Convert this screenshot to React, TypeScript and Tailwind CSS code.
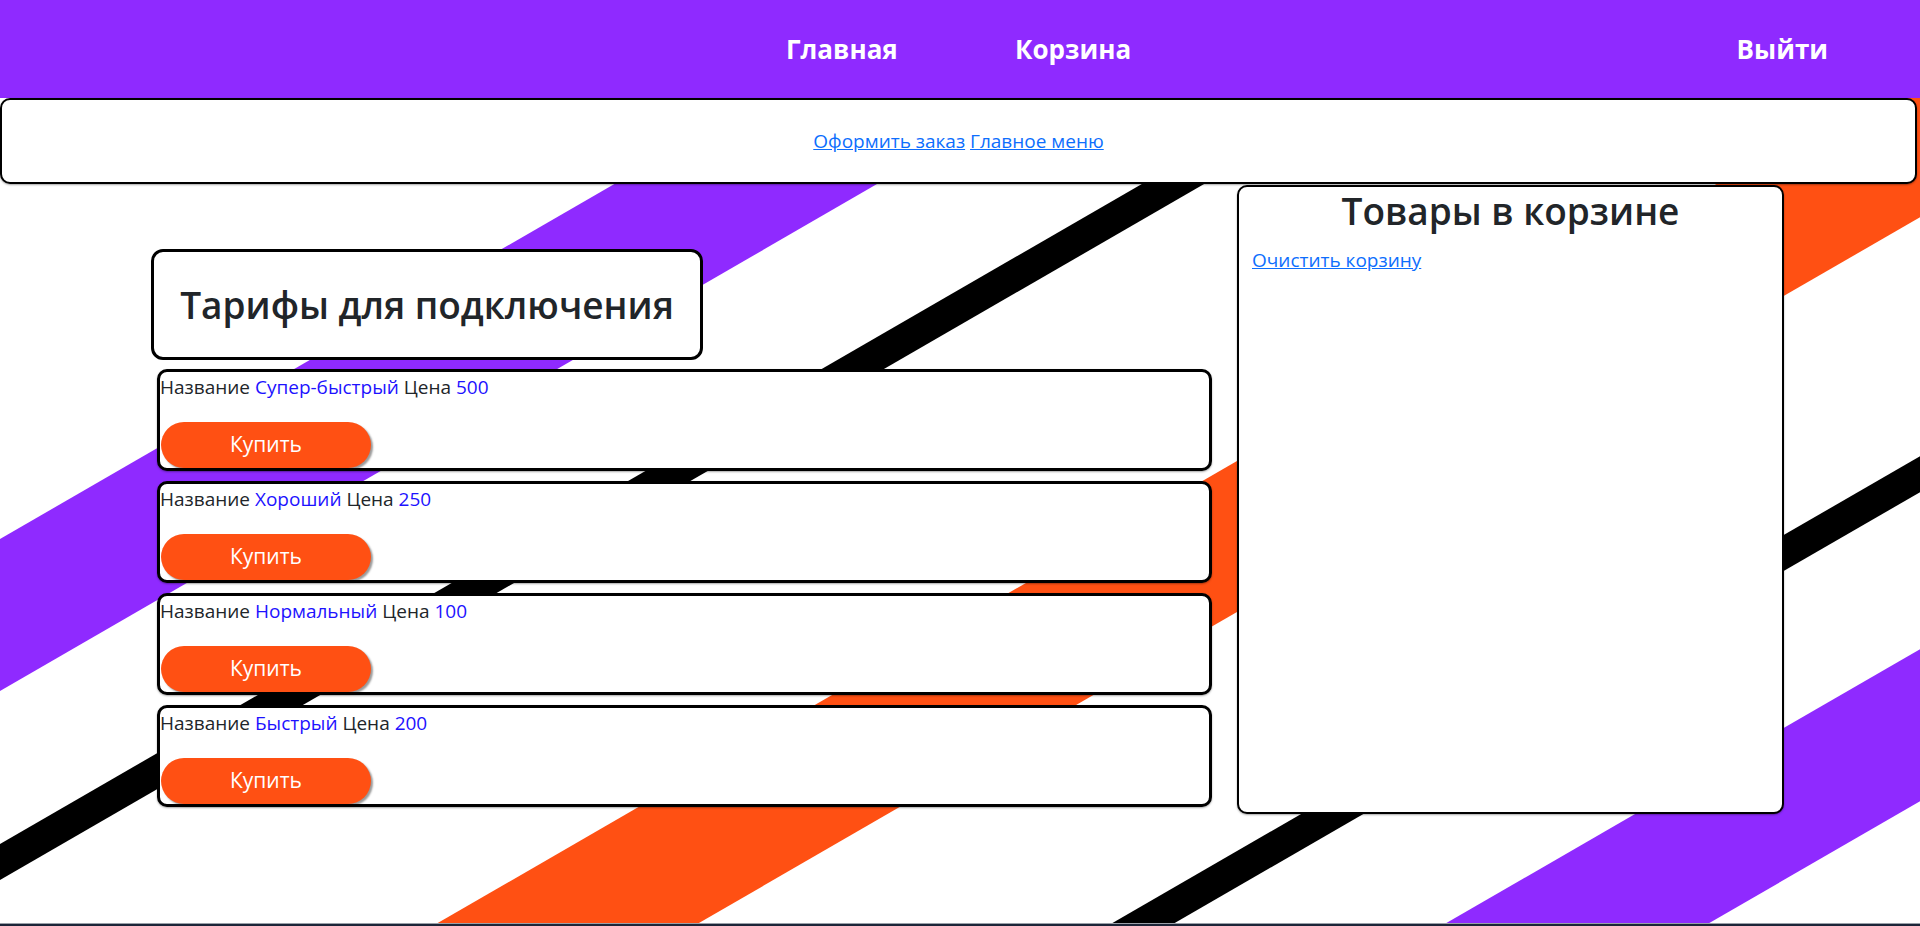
import React from 'react';

// Tariffs offered on the page
const tariffs = [
  { name: 'Супер-быстрый', price: 500 },
  { name: 'Хороший', price: 250 },
  { name: 'Нормальный', price: 100 },
  { name: 'Быстрый', price: 200 },
];

// Diagonal stripe bands: each band lies between two lines y + S * x = c
const S = 0.578;
const bands = [
  { c1: 539, c2: 691, color: '#8f2aff' },
  { c1: 844, c2: 880, color: '#000000' },
  { c1: 1176, c2: 1327, color: '#ff5013' },
  { c1: 1566, c2: 1602, color: '#000000' },
  { c1: 1759, c2: 1911, color: '#8f2aff' },
];

const bandPoints = (c1: number, c2: number): string => {
  const x0 = -100;
  const x1 = 2100;
  return [
    `${x0},${c1 - S * x0}`,
    `${x1},${c1 - S * x1}`,
    `${x1},${c2 - S * x1}`,
    `${x0},${c2 - S * x0}`,
  ].join(' ');
};

const StripesBackground: React.FC = () => (
  <svg
    className="absolute inset-x-0 top-0 h-[926px] w-full"
    viewBox="0 0 1920 926"
    preserveAspectRatio="none"
    aria-hidden="true"
  >
    <rect width="1920" height="926" fill="#ffffff" />
    {bands.map((b, i) => (
      <polygon key={i} points={bandPoints(b.c1, b.c2)} fill={b.color} />
    ))}
  </svg>
);

const Header: React.FC = () => (
  <header className="flex h-[98px] items-center bg-[#8f2aff] text-[26px] font-bold text-white">
    <nav className="ml-[786px] flex items-center">
      <a href="#" className="w-[229px]">Главная</a>
      <a href="#">Корзина</a>
    </nav>
    <a href="#" className="ml-auto mr-[92px]">Выйти</a>
  </header>
);

const TariffCard: React.FC<{ name: string; price: number }> = ({ name, price }) => (
  <div className="flex h-[102px] flex-col justify-between rounded-[10px] border-[3px] border-black bg-white shadow-[0_1px_2px_rgba(0,0,0,0.35)]">
    <p className="pt-[3px] text-[19px] leading-[24px] text-[#212529]">
      Название <span className="text-[#1d12ff]">{name}</span> Цена{' '}
      <span className="text-[#1d12ff]">{price}</span>
    </p>
    <button
      type="button"
      className="ml-px h-[46px] w-[210px] rounded-full bg-[#ff5013] text-[21px] text-white shadow-[2px_2px_2px_rgba(0,0,0,0.4)]"
    >
      Купить
    </button>
  </div>
);

const App: React.FC = () => {
  return (
    <div className="relative h-[926px] overflow-hidden font-['Open_Sans',sans-serif] text-[#212529]">
      <StripesBackground />
      <div className="relative flex h-[923px] flex-col">
        <Header />

        <div className="mr-[3px] flex h-[86px] items-center justify-center rounded-[10px] border-2 border-black bg-white shadow-[0_1px_2px_rgba(0,0,0,0.35)]">
          <p className="text-[19px] leading-[30px]">
            <a href="#" className="text-[#0d6efd] underline">Оформить заказ</a>{' '}
            <a href="#" className="text-[#0d6efd] underline">Главное меню</a>
          </p>
        </div>

        <main className="flex items-start">
          {/* Tariffs column */}
          <section className="ml-[151px] flex w-[1061px] flex-col pt-[65px]">
            <div className="flex h-[111px] w-[552px] items-center justify-center rounded-[12px] border-[3px] border-black bg-white">
              <h2 className="text-[37px] font-semibold leading-[48px] text-[#212529]">
                Тарифы для подключения
              </h2>
            </div>
            <div className="ml-[6px] mt-[9px] flex w-[1055px] flex-col gap-[10px]">
              {tariffs.map((t) => (
                <TariffCard key={t.name} name={t.name} price={t.price} />
              ))}
            </div>
          </section>

          {/* Cart column */}
          <aside className="ml-[25px] mt-px flex h-[629px] w-[547px] flex-col rounded-[10px] border-2 border-black bg-white shadow-[0_1px_2px_rgba(0,0,0,0.35)]">
            <h2 className="mb-[10px] text-center text-[37px] font-semibold leading-[48px] text-[#212529]">
              Товары в корзине
            </h2>
            <a href="#" className="self-start pl-[13px] text-[19px] leading-[30px] text-[#0d6efd] underline">
              Очистить корзину
            </a>
          </aside>
        </main>
      </div>
      <footer className="relative h-[3px] border-t border-[#9aa0a8] bg-[#1c2538]" />
    </div>
  );
};

export default App;
